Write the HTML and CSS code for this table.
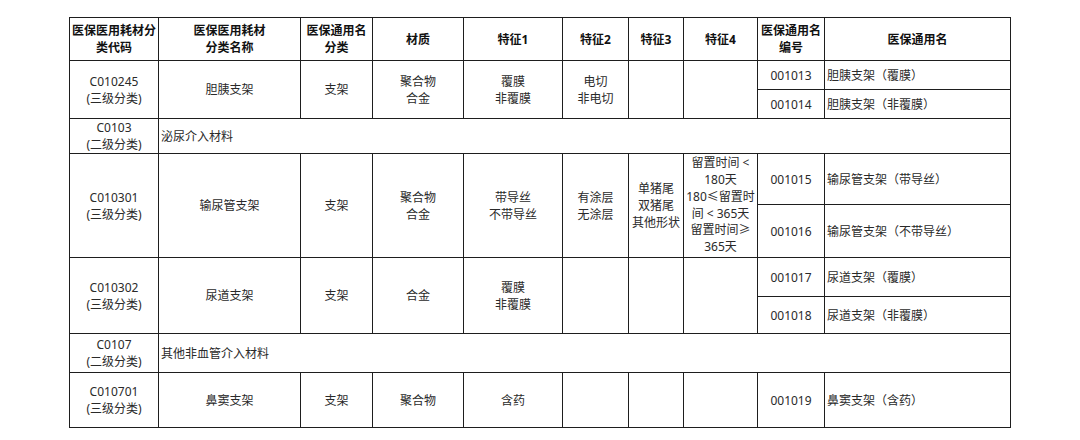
FILE: index.html
```html
<!DOCTYPE html>
<html lang="zh-CN">
<head>
<meta charset="utf-8">
<title>医保医用耗材分类</title>
<link rel="stylesheet" href="styles.css">
</head>
<body>
<div class="page">
<table class="grid">
  <colgroup>
    <col class="c1"><col class="c2"><col class="c3"><col class="c4"><col class="c5">
    <col class="c6"><col class="c7"><col class="c8"><col class="c9"><col class="c10">
  </colgroup>
  <thead>
    <tr class="h-head">
      <th>医保医用耗材分<br>类代码</th>
      <th>医保医用耗材<br>分类名称</th>
      <th>医保通用名<br>分类</th>
      <th>材质</th>
      <th>特征1</th>
      <th>特征2</th>
      <th>特征3</th>
      <th>特征4</th>
      <th>医保通用名<br>编号</th>
      <th>医保通用名</th>
    </tr>
  </thead>
  <tbody>
    <tr class="h-29">
      <td rowspan="2">C010245<br>(三级分类)</td>
      <td rowspan="2">胆胰支架</td>
      <td rowspan="2">支架</td>
      <td rowspan="2">聚合物<br>合金</td>
      <td rowspan="2">覆膜<br>非覆膜</td>
      <td rowspan="2">电切<br>非电切</td>
      <td rowspan="2"></td>
      <td rowspan="2"></td>
      <td>001013</td>
      <td class="name">胆胰支架（覆膜）</td>
    </tr>
    <tr class="h-29">
      <td>001014</td>
      <td class="name">胆胰支架（非覆膜）</td>
    </tr>
    <tr class="h-35">
      <td>C0103<br>(二级分类)</td>
      <td colspan="9" class="name">泌尿介入材料</td>
    </tr>
    <tr class="h-51">
      <td rowspan="2">C010301<br>(三级分类)</td>
      <td rowspan="2">输尿管支架</td>
      <td rowspan="2">支架</td>
      <td rowspan="2">聚合物<br>合金</td>
      <td rowspan="2">带导丝<br>不带导丝</td>
      <td rowspan="2">有涂层<br>无涂层</td>
      <td rowspan="2">单猪尾<br>双猪尾<br>其他形状</td>
      <td rowspan="2" class="dense">留置时间 &lt;<br>180天<br>180≤留置时<br>间 &lt; 365天<br>留置时间≥<br>365天</td>
      <td>001015</td>
      <td class="name">输尿管支架（带导丝）</td>
    </tr>
    <tr class="h-53">
      <td>001016</td>
      <td class="name">输尿管支架（不带导丝）</td>
    </tr>
    <tr class="h-39">
      <td rowspan="2">C010302<br>(三级分类)</td>
      <td rowspan="2">尿道支架</td>
      <td rowspan="2">支架</td>
      <td rowspan="2">合金</td>
      <td rowspan="2">覆膜<br>非覆膜</td>
      <td rowspan="2"></td>
      <td rowspan="2"></td>
      <td rowspan="2"></td>
      <td>001017</td>
      <td class="name">尿道支架（覆膜）</td>
    </tr>
    <tr class="h-37">
      <td>001018</td>
      <td class="name">尿道支架（非覆膜）</td>
    </tr>
    <tr class="h-39">
      <td>C0107<br>(二级分类)</td>
      <td colspan="9" class="name">其他非血管介入材料</td>
    </tr>
    <tr class="h-55">
      <td>C010701<br>(三级分类)</td>
      <td>鼻窦支架</td>
      <td>支架</td>
      <td>聚合物</td>
      <td>含药</td>
      <td></td>
      <td></td>
      <td></td>
      <td>001019</td>
      <td class="name">鼻窦支架（含药）</td>
    </tr>
  </tbody>
</table>
</div>
</body>
</html>
```

FILE: styles.css
```css
html, body {
  margin: 0;
  padding: 0;
  background: #ffffff;
}

.page {
  padding-top: 17px;
  display: flex;
  justify-content: center;
  font-family: "Noto Sans", "Noto Sans CJK SC", sans-serif;
  font-size: 12px;
  color: #2a2a2a;
}

.grid {
  width: 941px;
  table-layout: fixed;
  border-collapse: collapse;
  border: 1px solid #1e1e1e;
}

.c1 { width: 89px; }
.c2 { width: 142px; }
.c3 { width: 72px; }
.c4 { width: 91px; }
.c5 { width: 99px; }
.c6 { width: 66px; }
.c7 { width: 55px; }
.c8 { width: 74px; }
.c9 { width: 67px; }
.c10 { width: 186px; }

.grid th,
.grid td {
  border: 1px solid #1e1e1e;
  padding: 0;
  text-align: center;
  vertical-align: middle;
  line-height: 17px;
  overflow: hidden;
}

.grid th {
  font-weight: 700;
  color: #111111;
  white-space: nowrap;
}

.grid td.name {
  text-align: left;
  padding-left: 2px;
}

.grid td.dense {
  line-height: 16.8px;
  white-space: nowrap;
}

.h-head { height: 43px; }
.h-29 { height: 29px; }
.h-35 { height: 35px; }
.h-37 { height: 37px; }
.h-39 { height: 39px; }
.h-51 { height: 51px; }
.h-53 { height: 53px; }
.h-55 { height: 55px; }
```
